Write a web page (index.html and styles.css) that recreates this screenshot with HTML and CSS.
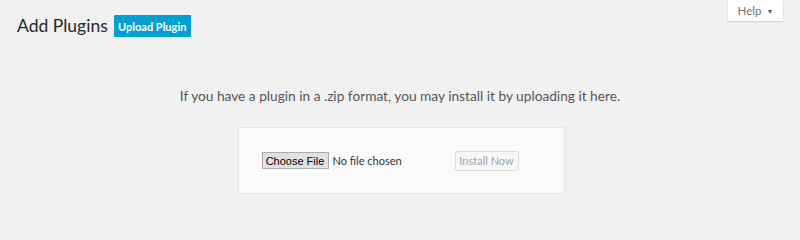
FILE: index.html
```html
<!DOCTYPE html>
<html>
<head>
<meta charset="utf-8">
<link rel="stylesheet" href="styles.css">
</head>
<body>
<div class="screen">
  <div class="help-bar">
    <div class="help-tab">Help <span class="caret">▼</span></div>
  </div>
  <div class="heading">
    <h1 class="title">Add Plugins</h1>
    <span class="upload-btn">Upload Plugin</span>
  </div>
  <p class="install-help">If you have a plugin in a .zip format, you may install it by uploading it here.</p>
  <div class="form-row">
    <div class="upload-form">
      <div class="file-input">
        <span class="choose-btn">Choose File</span>
        <span class="no-file">No file chosen</span>
      </div>
      <span class="install-btn">Install Now</span>
    </div>
  </div>
</div>
</body>
</html>
```
FILE: styles.css
```css
html, body {
  margin: 0;
  padding: 0;
  background: #f1f1f1;
}
.screen {
  width: 800px;
  height: 217px;
  overflow: hidden;
  font-family: Lato, "Noto Sans", sans-serif;
  color: #23282d;
}
.help-bar {
  display: flex;
  justify-content: flex-end;
  padding-right: 17px;
  height: 0;
}
.help-tab {
  width: 55px;
  height: 21px;
  box-sizing: border-box;
  background: #fff;
  box-shadow: 0 1px 1px rgba(0,0,0,0.08), 0 0 0 1px rgba(0,0,0,0.04);
  font-size: 11.5px;
  color: #72777c;
  display: flex;
  align-items: center;
  justify-content: center;
  gap: 5px;
  position: relative;
  z-index: 1;
}
.caret {
  font-size: 7px;
  color: #555d66;
}
.heading {
  display: flex;
  align-items: center;
  padding: 15px 0 0 17px;
  gap: 6px;
}
.title {
  margin: 0;
  font-size: 17.5px;
  font-weight: 400;
  line-height: 22px;
  color: #23282d;
}
.upload-btn {
  display: inline-flex;
  align-items: center;
  justify-content: center;
  width: 77px;
  height: 22px;
  box-sizing: border-box;
  background: #00a0d2;
  color: #fff;
  font-size: 11px;
  font-weight: 700;
  border-radius: 1px;
}
.install-help {
  margin: 0;
  padding-top: 49px;
  text-align: center;
  font-size: 13.7px;
  line-height: 20px;
  color: #555;
}
.form-row {
  display: flex;
  justify-content: center;
  padding-top: 21px;
  padding-left: 2px;
}
.upload-form {
  width: 327px;
  height: 67px;
  box-sizing: border-box;
  background: #fafafa;
  border: 1px solid #e5e5e5;
  display: flex;
  align-items: center;
  padding: 0 45px 0 23px;
  justify-content: space-between;
}
.file-input {
  display: flex;
  align-items: center;
  gap: 4px;
}
.choose-btn {
  display: inline-flex;
  align-items: center;
  justify-content: center;
  width: 67px;
  height: 17px;
  box-sizing: border-box;
  background: #e1e1e1;
  border: 1px solid #adadad;
  color: #000;
  font-family: "Liberation Sans", Arial, sans-serif;
  font-size: 11px;
}
.no-file {
  color: #333;
  font-size: 11px;
}
.install-btn {
  display: inline-flex;
  align-items: center;
  height: 20px;
  width: 64px;
  justify-content: center;
  box-sizing: border-box;
  background: #f7f7f7;
  border: 1px solid #ddd;
  color: #a0a5aa;
  font-size: 11px;
  border-radius: 2px;
}
```
